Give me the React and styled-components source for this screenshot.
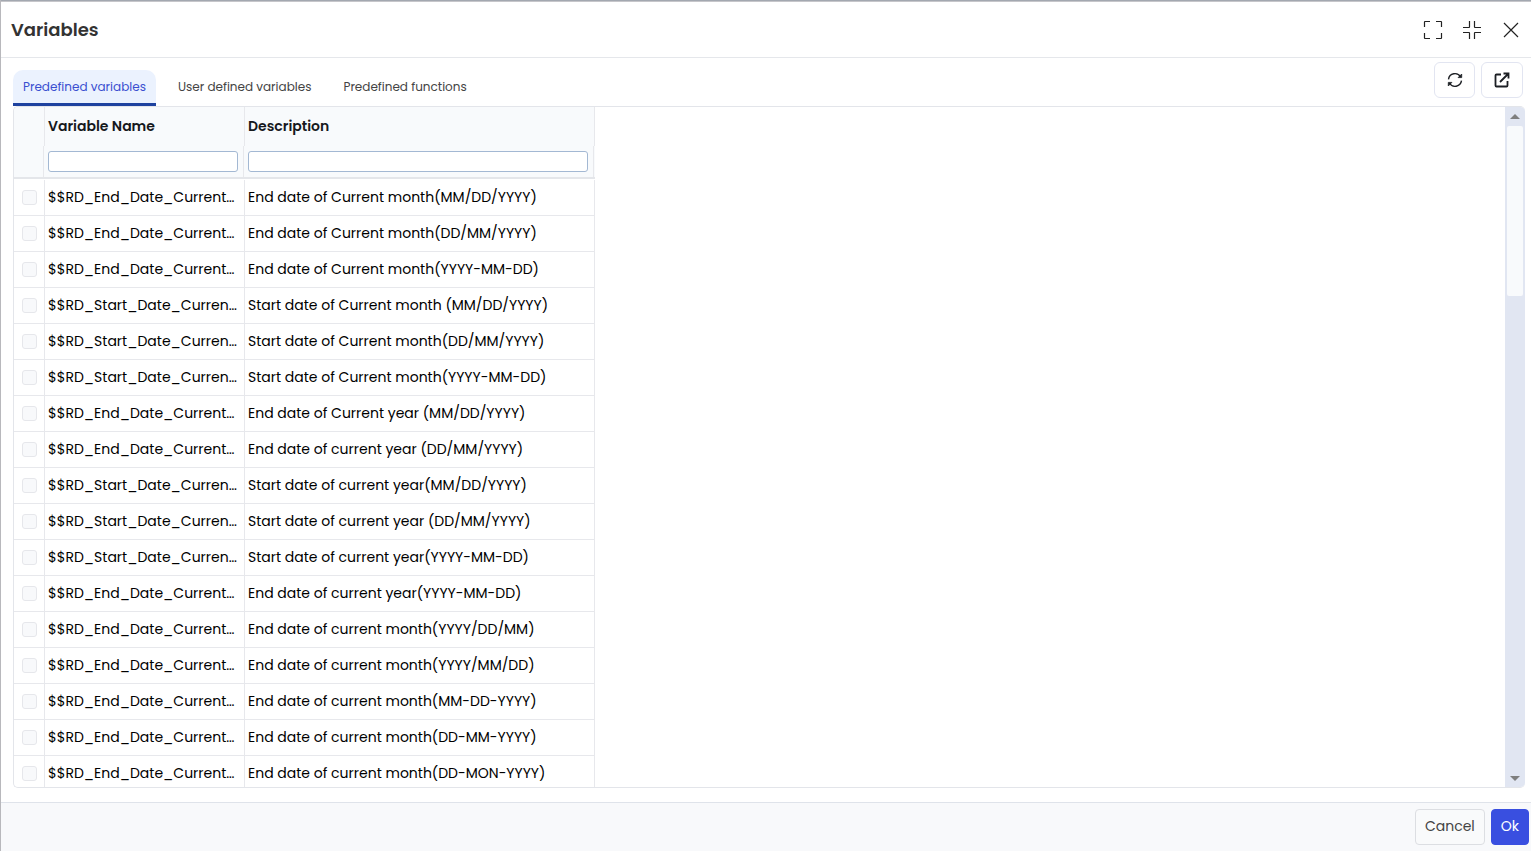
import { useState } from 'react';
import styled, { createGlobalStyle } from 'styled-components';

const GlobalStyles = createGlobalStyle`
  *,
  *::before,
  *::after {
    box-sizing: border-box;
    margin: 0;
    padding: 0;
  }

  body {
    font-family: Poppins, Inter, sans-serif;
    font-size: 14px;
    color: #000;
    background-color: #fff;
  }

  button,
  input {
    font: inherit;
  }
`;

const Dialog = styled.section`
  height: 100vh;
  display: flex;
  flex-direction: column;
  background-color: #fff;
  border-left: 1px solid #b8b8bc;

  &::before {
    content: '';
    flex: none;
    height: 2px;
    background-color: #a3a8b0;
    border-bottom: 1px solid #c6c6ca;
  }
`;

const Header = styled.header`
  flex: none;
  height: 56px;
  display: flex;
  align-items: center;
  justify-content: space-between;
  padding: 0 9px 0 10px;
  border-bottom: 1px solid #e5e7eb;
`;

const Title = styled.h1`
  font-size: 18px;
  font-weight: 600;
  line-height: 28px;
  color: #333;
`;

const HeaderActions = styled.div`
  display: flex;
  gap: 17px;
`;

const IconButton = styled.button`
  display: flex;
  align-items: center;
  justify-content: center;
  width: 22px;
  height: 24px;
  background: none;
  border: none;
  color: #222;
  cursor: pointer;
`;

const Body = styled.main`
  flex: 1;
  min-height: 0;
  display: flex;
  flex-direction: column;
  padding: 4px 6px 14px 12px;
`;

const Toolbar = styled.div`
  flex: none;
  height: 44px;
  display: flex;
  justify-content: space-between;
`;

const Tabs = styled.div`
  display: flex;
  align-items: flex-end;
  gap: 12px;
`;

const Tab = styled.button`
  height: 36px;
  padding: 0 10px;
  font-size: 12px;
  line-height: 20px;
  cursor: pointer;
  border: none;
  border-bottom: 3px solid ${(props) => (props.$active ? '#1e429f' : 'transparent')};
  border-radius: ${(props) => (props.$active ? '10px 10px 0 0' : '0')};
  background-color: ${(props) => (props.$active ? '#ebf2fe' : 'transparent')};
  color: ${(props) => (props.$active ? '#3a4fd0' : '#444')};
`;

const ToolButtons = styled.div`
  display: flex;
  gap: 6px;
  padding-right: 2px;
`;

const ToolButton = styled.button`
  display: flex;
  align-items: center;
  justify-content: center;
  width: ${(props) => (props.$wide ? '42px' : '41px')};
  height: 36px;
  color: #1c1f24;
  background-color: #fff;
  border: 1px solid #e2e5f1;
  border-radius: 6px;
  cursor: pointer;
`;

const Panel = styled.div`
  flex: 1;
  min-height: 0;
  display: flex;
  justify-content: space-between;
  overflow: hidden;
  border: 1px solid #e3e5ea;
  border-right: none;
  border-radius: 5px;
`;

const TableArea = styled.div`
  flex: 1;
  overflow: hidden;
`;

const Table = styled.table`
  table-layout: fixed;
  width: 581px;
  border-collapse: separate;
  border-spacing: 0;

  tbody::before {
    content: '';
    display: block;
    height: 1px;
  }
`;

const HeadCell = styled.th`
  height: 39px;
  padding: 0 4px 2px 3px;
  text-align: left;
  font-weight: 600;
  line-height: 20px;
  color: #16181d;
  background-color: #f8fafc;
  border-right: 1px solid #e7e8ec;
`;

const FilterCell = styled.td`
  padding: 0 1px 0 0;
  background-color: #f8fafc;
  border-bottom: 2px solid #e4e6ea;
`;

const FilterBox = styled.div`
  height: 31px;
  display: flex;
  align-items: center;
  padding: 0 5px 0 3px;
  border-right: 1px solid #e7e8ec;
`;

const FilterInput = styled.input`
  width: 100%;
  height: 21px;
  padding: 0 4px;
  background-color: #fff;
  border: 1px solid #a3b8d3;
  border-radius: 3px;
`;

const Cell = styled.td`
  height: 36px;
  padding: 0 4px 2px 3px;
  line-height: 20px;
  white-space: nowrap;
  overflow: hidden;
  border-right: 1px solid #e7e8ec;
  border-bottom: 1px solid #e7e8ec;
`;

const CheckCell = styled(Cell)`
  padding: 0 0 0 8px;
`;

const Checkbox = styled.input`
  display: block;
  appearance: none;
  width: 15px;
  height: 15px;
  background-color: #f8f9fb;
  border: 1px solid #e6e7eb;
  border-radius: 3px;
`;

const Scrollbar = styled.div`
  flex: none;
  width: 20px;
  display: flex;
  flex-direction: column;
  align-items: center;
  background-color: #e1e6f2;
`;

const ScrollArrow = styled.button`
  flex: none;
  display: flex;
  align-items: center;
  justify-content: center;
  width: 20px;
  height: 18px;
  background: none;
  border: none;
  color: #7f7f7f;
`;

const ScrollTrack = styled.div`
  flex: 1;
  width: 16px;
  padding-top: 1px;
`;

const ScrollThumb = styled.div`
  height: 170px;
  background-color: #f8fafc;
  border-radius: 2px;
`;

const Footer = styled.footer`
  flex: none;
  display: flex;
  justify-content: flex-end;
  gap: 6px;
  padding: 6px 2px;
  background-color: #f8f9fb;
  border-top: 1px solid #dfe3ea;
`;

const Button = styled.button`
  height: 36px;
  padding: 0 9px 2px;
  line-height: 20px;
  border-radius: 4px;
  cursor: pointer;
  color: ${(props) => (props.$primary ? '#fff' : '#444')};
  background-color: ${(props) => (props.$primary ? '#394fe0' : '#f9fafb')};
  border: 1px solid ${(props) => (props.$primary ? '#394fe0' : '#dcdee2')};
`;

const tabs = ['Predefined variables', 'User defined variables', 'Predefined functions'];

const END = '$$RD_End_Date_Current…';
const START = '$$RD_Start_Date_Curren…';

const variables = [
  [END, 'End date of Current month(MM/DD/YYYY)'],
  [END, 'End date of Current month(DD/MM/YYYY)'],
  [END, 'End date of Current month(YYYY-MM-DD)'],
  [START, 'Start date of Current month (MM/DD/YYYY)'],
  [START, 'Start date of Current month(DD/MM/YYYY)'],
  [START, 'Start date of Current month(YYYY-MM-DD)'],
  [END, 'End date of Current year (MM/DD/YYYY)'],
  [END, 'End date of current year (DD/MM/YYYY)'],
  [START, 'Start date of current year(MM/DD/YYYY)'],
  [START, 'Start date of current year (DD/MM/YYYY)'],
  [START, 'Start date of current year(YYYY-MM-DD)'],
  [END, 'End date of current year(YYYY-MM-DD)'],
  [END, 'End date of current month(YYYY/DD/MM)'],
  [END, 'End date of current month(YYYY/MM/DD)'],
  [END, 'End date of current month(MM-DD-YYYY)'],
  [END, 'End date of current month(DD-MM-YYYY)'],
  [END, 'End date of current month(DD-MON-YYYY)'],
];

function ExpandIcon() {
  return (
    <svg width="20" height="20" viewBox="0 0 20 20" fill="none" stroke="currentColor" strokeWidth="1.2">
      <path d="M1.500 7V2q0-.5.5-.5H7M13 1.500h5q.5 0 .5.5V7M18.500 13v5q0 .5-.5.5H13M7 18.500H2q-.5 0-.5-.5V13" />
    </svg>
  );
}

function CollapseIcon() {
  return (
    <svg width="20" height="20" viewBox="0 0 20 20" fill="none" stroke="currentColor" strokeWidth="1.2">
      <path d="M7.500 1v6q0 .5-.5.500H1M12.500 1v6q0 .5.5.500H19M7.500 19v-6q0-.5-.5-.500H1M12.500 19v-6q0-.5.5-.500H19" />
    </svg>
  );
}

function CloseIcon() {
  return (
    <svg width="16" height="16" viewBox="0 0 16 16" fill="none" stroke="currentColor" strokeWidth="1.2">
      <path d="M1 1l14 14M15 1L1 15" />
    </svg>
  );
}

function RefreshIcon() {
  return (
    <svg width="16" height="16" viewBox="0 0 16 16" fill="none" stroke="currentColor" strokeWidth="1.4">
      <path d="M1.500 7.300A6.500 6.500 0 0 1 13.600 5M14.500 8.700A6.500 6.500 0 0 1 2.400 11" />
      <path d="M14.700 2v3.600h-3.600zM1.300 14v-3.600h3.600z" fill="currentColor" strokeWidth="0.8" />
    </svg>
  );
}

function ExternalIcon() {
  return (
    <svg width="16" height="16" viewBox="0 0 16 16" fill="none" stroke="currentColor" strokeWidth="1.8">
      <path d="M7 2.500H2.500a1 1 0 0 0-1 1v10a1 1 0 0 0 1 1h10a1 1 0 0 0 1-1V9" />
      <path d="M9.500 1.500h5v5M14.500 1.500L6 10" />
    </svg>
  );
}

function VariablesTable() {
  return (
    <Table>
      <colgroup>
        <col width="31" />
        <col width="200" />
        <col width="350" />
      </colgroup>
      <thead>
        <tr>
          <HeadCell aria-label="Select" />
          <HeadCell>Variable Name</HeadCell>
          <HeadCell>Description</HeadCell>
        </tr>
        <tr>
          <FilterCell>
            <FilterBox />
          </FilterCell>
          <FilterCell>
            <FilterBox>
              <FilterInput type="text" aria-label="Filter variable name" />
            </FilterBox>
          </FilterCell>
          <FilterCell>
            <FilterBox>
              <FilterInput type="text" aria-label="Filter description" />
            </FilterBox>
          </FilterCell>
        </tr>
      </thead>
      <tbody>
        {variables.map(([name, description]) => (
          <tr key={description}>
            <CheckCell>
              <Checkbox type="checkbox" aria-label={description} />
            </CheckCell>
            <Cell>{name}</Cell>
            <Cell>{description}</Cell>
          </tr>
        ))}
      </tbody>
    </Table>
  );
}

function App() {
  const [activeTab, setActiveTab] = useState(tabs[0]);

  return (
    <>
      <GlobalStyles />
      <Dialog role="dialog" aria-labelledby="dialog-title">
        <Header>
          <Title id="dialog-title">Variables</Title>
          <HeaderActions>
            <IconButton aria-label="Maximize">
              <ExpandIcon />
            </IconButton>
            <IconButton aria-label="Restore">
              <CollapseIcon />
            </IconButton>
            <IconButton aria-label="Close">
              <CloseIcon />
            </IconButton>
          </HeaderActions>
        </Header>

        <Body>
          <Toolbar>
            <Tabs role="tablist">
              {tabs.map((tab) => (
                <Tab
                  key={tab}
                  role="tab"
                  aria-selected={tab === activeTab}
                  $active={tab === activeTab}
                  onClick={() => setActiveTab(tab)}
                >
                  {tab}
                </Tab>
              ))}
            </Tabs>
            <ToolButtons>
              <ToolButton aria-label="Refresh">
                <RefreshIcon />
              </ToolButton>
              <ToolButton $wide aria-label="Open in new window">
                <ExternalIcon />
              </ToolButton>
            </ToolButtons>
          </Toolbar>

          <Panel role="tabpanel">
            <TableArea>
              <VariablesTable />
            </TableArea>
            <Scrollbar>
              <ScrollArrow aria-label="Scroll up">
                <svg width="10" height="5" viewBox="0 0 10 5" fill="currentColor">
                  <path d="M5 0l5 5H0z" />
                </svg>
              </ScrollArrow>
              <ScrollTrack>
                <ScrollThumb />
              </ScrollTrack>
              <ScrollArrow aria-label="Scroll down">
                <svg width="10" height="5" viewBox="0 0 10 5" fill="currentColor">
                  <path d="M0 0h10L5 5z" />
                </svg>
              </ScrollArrow>
            </Scrollbar>
          </Panel>
        </Body>

        <Footer>
          <Button>Cancel</Button>
          <Button $primary>Ok</Button>
        </Footer>
      </Dialog>
    </>
  );
}

export default App;
